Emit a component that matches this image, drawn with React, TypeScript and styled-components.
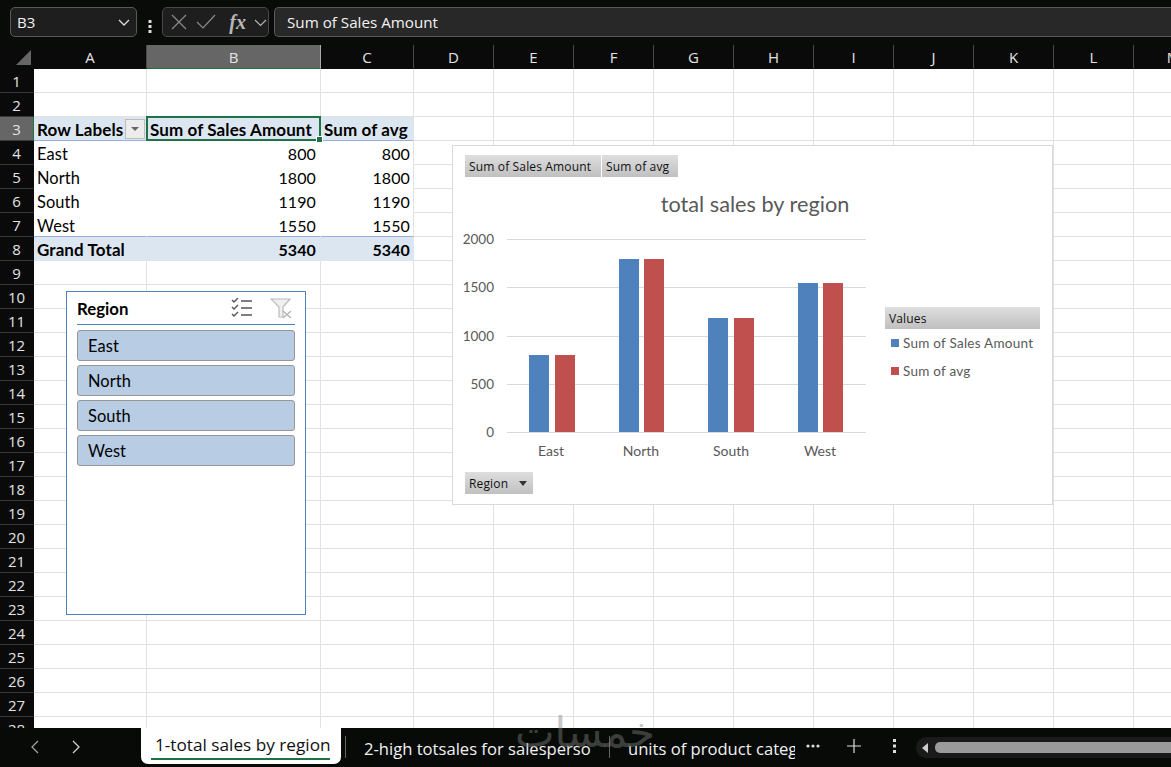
import React from "react";
import styled, { createGlobalStyle } from "styled-components";

const GlobalStyle = createGlobalStyle`
  html, body { margin: 0; padding: 0; background: #0a0d0a; overflow: hidden; }
  #root { width: 1171px; height: 767px; }
`;

const COLS: [string, number][] = [
  ["A", 113], ["B", 174], ["C", 93], ["D", 80], ["E", 80], ["F", 80], ["G", 80],
  ["H", 80], ["I", 80], ["J", 80], ["K", 80], ["L", 80], ["M", 80],
];
const TEMPLATE = `34px ${COLS.map((c) => c[1] + "px").join(" ")}`;

const Page = styled.div`
  position: relative;
  width: 1171px;
  height: 767px;
  overflow: hidden;
  display: flex;
  flex-direction: column;
  background: #070a07;
  font-family: "Lato", "Liberation Sans", sans-serif;
`;

const FormulaBar = styled.div`
  height: 45px;
  flex: none;
  display: flex;
  align-items: flex-start;
  padding: 7px 0 0 10px;
  box-sizing: border-box;
  background: #080b08;
`;
const DarkBox = styled.div`
  height: 30px;
  box-sizing: border-box;
  border: 1px solid #5a5a5a;
  border-radius: 5px;
  background: #1e1e1e;
  display: flex;
  align-items: center;
  color: #f2f2f2;
  font-family: "Open Sans", sans-serif;
  font-size: 15px;
`;
const NameBox = styled(DarkBox)`
  width: 127px;
  padding: 0 5px 0 6px;
  justify-content: space-between;
`;
const Grip = styled.div`
  width: 25px;
  display: flex;
  justify-content: center;
  align-self: center;
`;
const FxBox = styled(DarkBox)`
  width: 107px;
  padding: 0 1px 0 8px;
  justify-content: space-between;
  border-color: #484848;
`;
const Fx = styled.span`
  font-family: "Liberation Serif", serif;
  font-style: italic;
  font-weight: 700;
  font-size: 20px;
  color: #b8b8b8;
  margin-left: 4px;
`;
const FormulaInput = styled(DarkBox)`
  margin-left: 5px;
  flex: 1;
  padding-left: 12px;
  border-right: none;
  border-radius: 5px 0 0 5px;
  background: #282828;
  font-size: 15.2px;
`;

const SheetArea = styled.div`
  position: relative;
  flex: 1;
  overflow: hidden;
  background: #fff;
`;
const HeaderRow = styled.div`
  display: grid;
  grid-template-columns: ${TEMPLATE};
  height: 24px;
  background: #0a0a0a;
`;
const Corner = styled.div`
  position: relative;
  &::after {
    content: "";
    position: absolute;
    right: 3px;
    bottom: 4px;
    border-style: solid;
    border-width: 0 0 15px 15px;
    border-color: transparent transparent #666 transparent;
  }
`;
const ColHead = styled.div<{ $active?: boolean }>`
  display: flex;
  align-items: center;
  justify-content: center;
  box-sizing: border-box;
  color: #e4e4e4;
  font-size: 15px;
  font-family: "Open Sans", sans-serif;
  border-right: 1px solid ${(p) => (p.$active ? "#aaa" : "#4a4a4a")};
  background: ${(p) => (p.$active ? "#666" : "transparent")};
  border-bottom: 1px solid ${(p) => (p.$active ? "#1f7246" : "transparent")};
`;
const Row = styled.div`
  display: grid;
  grid-template-columns: ${TEMPLATE};
  height: 24px;
`;
const RowHead = styled.div<{ $active?: boolean }>`
  display: flex;
  align-items: center;
  justify-content: center;
  box-sizing: border-box;
  color: #e4e4e4;
  font-size: 15px;
  font-family: "Open Sans", sans-serif;
  background: ${(p) => (p.$active ? "#666" : "#0a0a0a")};
  border-bottom: 1px solid #3a3a3a;
  border-right: 1px solid ${(p) => (p.$active ? "#1f7246" : "#0a0a0a")};
`;
const Cell = styled.div<{ $fill?: boolean; $right?: boolean; $bold?: boolean; $bottomLine?: boolean; $pivot?: boolean; $edge?: boolean; $pr?: number }>`
  position: relative;
  box-sizing: border-box;
  display: flex;
  align-items: center;
  justify-content: ${(p) => (p.$right ? "flex-end" : "flex-start")};
  padding: 1px ${(p) => p.$pr ?? 3}px 0 3px;
  font-size: ${(p) => (p.$right ? 16 : p.$bold ? 17 : 16.4)}px;
  letter-spacing: 0.1px;
  white-space: nowrap;
  color: #000;
  font-weight: ${(p) => (p.$bold ? 700 : 400)};
  background: ${(p) => (p.$fill ? "#dce6f1" : "#fff")};
  border-right: 1px solid ${(p) => (p.$fill || (p.$pivot && !p.$edge) ? "transparent" : "#e1e1e1")};
  border-bottom: 1px solid ${(p) => (p.$bottomLine ? "#95b3d7" : p.$fill || p.$pivot ? "transparent" : "#e1e1e1")};
`;
const FilterBtn = styled.span`
  position: absolute;
  right: 1px;
  top: 2px;
  width: 20px;
  height: 20px;
  box-sizing: border-box;
  border: 1px solid #bdbdbd;
  background: #ececec;
  display: flex;
  align-items: center;
  justify-content: center;
  &::after {
    content: "";
    border-style: solid;
    border-width: 4px 4px 0 4px;
    border-color: #666 transparent transparent transparent;
  }
`;
const Selection = styled.div`
  position: absolute;
  inset: -1px -1px -1px -1px;
  border: 2px solid #1f7246;
  z-index: 2;
  &::after {
    content: "";
    position: absolute;
    right: -4px;
    bottom: -4px;
    width: 5px;
    height: 5px;
    background: #1f7246;
    border: 1px solid #fff;
  }
`;

const Slicer = styled.div`
  position: absolute;
  left: 66px;
  top: 246px;
  width: 240px;
  height: 324px;
  box-sizing: border-box;
  border: 1px solid #4f81bd;
  background: #fff;
  padding: 0 10px;
  z-index: 3;
`;
const SlicerHead = styled.div`
  height: 33px;
  box-sizing: border-box;
  display: flex;
  align-items: center;
  justify-content: space-between;
  border-bottom: 1px solid #4f81bd;
  font-weight: 700;
  font-size: 16.8px;
  padding-right: 3px;
`;
const SlicerIcons = styled.div`
  display: flex;
  gap: 17px;
  align-items: center;
`;
const SlicerList = styled.div`
  display: flex;
  flex-direction: column;
  gap: 4px;
  padding-top: 5px;
`;
const SlicerItem = styled.div`
  height: 31px;
  box-sizing: border-box;
  border: 1px solid #969696;
  border-radius: 3px;
  background: #b8cce4;
  padding-left: 10px;
  display: flex;
  align-items: center;
  font-size: 16.4px;
  letter-spacing: 0.1px;
`;

const Chart = styled.div`
  position: absolute;
  left: 452px;
  top: 100px;
  width: 601px;
  height: 360px;
  box-sizing: border-box;
  border: 1px solid #d9d9d9;
  background: #fff;
  z-index: 3;
`;
const ChartPlot = styled.svg`
  display: block;
`;
const FieldRow = styled.div`
  position: absolute;
  left: 12px;
  top: 9px;
  display: flex;
  gap: 1px;
`;
const FieldBtn = styled.div<{ $w: number }>`
  width: ${(p) => p.$w}px;
  height: 22px;
  box-sizing: border-box;
  padding-left: 4px;
  display: flex;
  align-items: center;
  justify-content: space-between;
  font-family: "Open Sans", sans-serif;
  font-size: 12px;
  letter-spacing: 0.15px;
  white-space: nowrap;
  color: #111;
  background: linear-gradient(#dedede, #c0c0c0);
`;
const RegionBtn = styled(FieldBtn)`
  position: absolute;
  left: 12px;
  top: 326px;
  padding-right: 6px;
  &::after {
    content: "";
    border-style: solid;
    border-width: 5px 4px 0 4px;
    border-color: #333 transparent transparent transparent;
  }
`;
const Legend = styled.div`
  position: absolute;
  left: 432px;
  top: 161px;
  width: 155px;
`;
const LegendItem = styled.div`
  height: 28px;
  display: flex;
  align-items: center;
  gap: 4px;
  padding-left: 6px;
  color: #595959;
  font-size: 13.5px;
  letter-spacing: 0.25px;
`;
const Swatch = styled.span<{ $c: string }>`
  width: 8px;
  height: 8px;
  background: ${(p) => p.$c};
`;

const TabBar = styled.div`
  position: absolute;
  left: 0;
  right: 0;
  bottom: 0;
  height: 39px;
  background: #070a07;
  box-sizing: border-box;
  display: flex;
  align-items: flex-start;
  color: #f2f2f2;
  font-family: "Open Sans", sans-serif;
  font-size: 16.6px;
  z-index: 4;
`;
const TabNav = styled.div`
  width: 141px;
  height: 100%;
  display: flex;
  align-items: center;
  gap: 27px;
  padding: 0 0 2px 30px;
  box-sizing: border-box;
  flex: none;
`;
const ActiveTab = styled.div`
  flex: none;
  width: 200px;
  height: 36px;
  box-sizing: border-box;
  background: #fff;
  color: #111;
  border-radius: 0 0 7px 7px;
  padding: 5px 0 0 14px;
  display: flex;
  flex-direction: column;
  align-items: flex-start;
  white-space: nowrap;
  font-size: 17.2px;
  line-height: 23px;
  &::after {
    content: "";
    width: 179px;
    height: 2px;
    background: #1f7246;
    margin: 2px 0 0 -4px;
  }
`;
const Tab = styled.div<{ $w: number; $pad: number }>`
  flex: none;
  width: ${(p) => p.$w}px;
  height: 34px;
  overflow: hidden;
  white-space: nowrap;
  padding: 9px 0 0 ${(p) => p.$pad}px;
  box-sizing: border-box;
`;
const Sep = styled.div`
  width: 1px;
  height: 22px;
  margin: 8px 0 0 4px;
  background: #666;
  flex: none;
`;
const ThinSep = styled(Sep)`
  margin-left: 0;
`;
const TabTools = styled.div`
  flex: none;
  width: 121px;
  height: 100%;
  display: flex;
  align-items: center;
  padding-bottom: 4px;
  box-sizing: border-box;
  padding-left: 6px;
  gap: 10px;
`;
const ScrollTrack = styled.div`
  flex: 1;
  margin-top: 9px;
  height: 21px;
  border-radius: 10px 0 0 10px;
  background: #1a1a1a;
  display: flex;
  align-items: center;
  padding-left: 5px;
  gap: 6px;
`;
const ScrollThumb = styled.div`
  flex: 1;
  height: 11px;
  border-radius: 5px 0 0 5px;
  background: #9a9a9a;
`;
const Watermark = styled.div`
  position: absolute;
  left: 515px;
  top: 708px;
  font-family: "DejaVu Sans", sans-serif;
  font-size: 42px;
  line-height: 50px;
  color: rgba(130, 130, 130, 0.45);
  z-index: 6;
  pointer-events: none;
  direction: rtl;
`;

const rows: Record<number, { a: string; b: string; c: string }> = {
  4: { a: "East", b: "800", c: "800" },
  5: { a: "North", b: "1800", c: "1800" },
  6: { a: "South", b: "1190", c: "1190" },
  7: { a: "West", b: "1550", c: "1550" },
};

const bars = [
  { label: "East", blue: 76, red: 102, cx: 98, h: 77 },
  { label: "North", blue: 166, red: 191, cx: 188, h: 173 },
  { label: "South", blue: 255, red: 281, cx: 278, h: 114 },
  { label: "West", blue: 345, red: 370, cx: 367, h: 149 },
];
const ticks = [
  { v: 0, y: 286 },
  { v: 500, y: 238 },
  { v: 1000, y: 190 },
  { v: 1500, y: 141 },
  { v: 2000, y: 93 },
];

function App() {
  const rowNums = Array.from({ length: 28 }, (_, i) => i + 1);
  const y0 = 286;
  return (
    <Page>
      <GlobalStyle />
      <FormulaBar>
        <NameBox>
          B3
          <svg width="14" height="14" viewBox="0 0 14 14" fill="none" stroke="#ddd" strokeWidth="1.3"><path d="M2 5l5 5 5-5" /></svg>
        </NameBox>
        <Grip>
          <svg width="4" height="14" viewBox="0 0 4 14" fill="#ddd"><rect x="0.5" y="1" width="3" height="3" /><rect x="0.5" y="6" width="3" height="3" /><rect x="0.5" y="11" width="3" height="3" /></svg>
        </Grip>
        <FxBox>
          <svg width="16" height="16" viewBox="0 0 16 16" fill="none" stroke="#8a8a8a" strokeWidth="1.2"><path d="M1 1l14 14M15 1L1 15" /></svg>
          <svg width="22" height="16" viewBox="0 0 22 16" fill="none" stroke="#8a8a8a" strokeWidth="1.2"><path d="M2 8l6 6L20 1" /></svg>
          <Fx>fx</Fx>
          <svg width="13" height="13" viewBox="0 0 13 13" fill="none" stroke="#b8b8b8" strokeWidth="1.1"><path d="M1 4l5.5 5.5L12 4" /></svg>
        </FxBox>
        <FormulaInput>Sum of Sales Amount</FormulaInput>
      </FormulaBar>
      <SheetArea>
        <HeaderRow>
          <Corner />
          {COLS.map(([c]) => (
            <ColHead key={c} $active={c === "B"}>{c}</ColHead>
          ))}
        </HeaderRow>
        {rowNums.map((n) => {
          const r = rows[n];
          if (n === 3) {
            return (
              <Row key={n}>
                <RowHead $active>{n}</RowHead>
                <Cell $fill $bold $bottomLine>Row Labels<FilterBtn /></Cell>
                <Cell $fill $bold $bottomLine>Sum of Sales Amount<Selection /></Cell>
                <Cell $fill $bold $bottomLine $pr={2}>Sum of avg</Cell>
                {COLS.slice(3).map(([c]) => <Cell key={c} />)}
              </Row>
            );
          }
          if (n === 8) {
            return (
              <Row key={n}>
                <RowHead>{n}</RowHead>
                <Cell $fill $bold>Grand Total</Cell>
                <Cell $fill $bold $right $pr={4}>5340</Cell>
                <Cell $fill $bold $right>5340</Cell>
                {COLS.slice(3).map(([c]) => <Cell key={c} />)}
              </Row>
            );
          }
          if (r) {
            return (
              <Row key={n}>
                <RowHead>{n}</RowHead>
                <Cell $pivot $bottomLine={n === 7}>{r.a}</Cell>
                <Cell $pivot $right $pr={4} $bottomLine={n === 7}>{r.b}</Cell>
                <Cell $pivot $edge $right $bottomLine={n === 7}>{r.c}</Cell>
                {COLS.slice(3).map(([c]) => <Cell key={c} />)}
              </Row>
            );
          }
          return (
            <Row key={n}>
              <RowHead>{n}</RowHead>
              {COLS.map(([c]) => <Cell key={c} />)}
            </Row>
          );
        })}
        <Slicer>
          <SlicerHead>
            Region
            <SlicerIcons>
              <svg width="22" height="20" viewBox="0 0 22 20" fill="none" stroke="#555" strokeWidth="1.4">
                <path d="M1 2l2 2 4-4M1 9l2 2 4-4M1 16l2 2 4-4M10 3h11M10 10h11M10 17h11" />
              </svg>
              <svg width="22" height="21" viewBox="0 0 22 21" fill="none">
                <path d="M1 1h19l-7 8v10h-4V9z" fill="#efefef" stroke="#bcbcbc" strokeWidth="1.2" />
                <path d="M13 13l8 7M21 13l-8 7" stroke="#b4b4b4" strokeWidth="1.4" />
              </svg>
            </SlicerIcons>
          </SlicerHead>
          <SlicerList>
            {["East", "North", "South", "West"].map((s) => <SlicerItem key={s}>{s}</SlicerItem>)}
          </SlicerList>
        </Slicer>
        <Chart>
          <ChartPlot width="599" height="358" viewBox="0 0 599 358">
            <text x="302" y="66" textAnchor="middle" fontFamily="Lato, sans-serif" fontSize="21.7" fill="#595959">total sales by region</text>
            {ticks.map((t) => (
              <g key={t.v}>
                <line x1="54" x2="413" y1={t.y + 0.5} y2={t.y + 0.5} stroke="#d9d9d9" />
                <text x="41" y={t.y + 5} textAnchor="end" fontFamily="Lato, sans-serif" fontSize="13.5" fill="#595959">{t.v}</text>
              </g>
            ))}
            {bars.map((b) => (
              <g key={b.label}>
                <rect x={b.blue} y={y0 - b.h} width="20" height={b.h} fill="#4f81bd" />
                <rect x={b.red} y={y0 - b.h} width="20" height={b.h} fill="#c0504d" />
                <text x={b.cx} y="310" textAnchor="middle" fontFamily="Lato, sans-serif" fontSize="14" fill="#595959">{b.label}</text>
              </g>
            ))}
          </ChartPlot>
          <FieldRow>
            <FieldBtn $w={136}>Sum of Sales Amount</FieldBtn>
            <FieldBtn $w={76}>Sum of avg</FieldBtn>
          </FieldRow>
          <RegionBtn $w={68}>Region</RegionBtn>
          <Legend>
            <FieldBtn $w={155}>Values</FieldBtn>
            <LegendItem><Swatch $c="#4f81bd" />Sum of Sales Amount</LegendItem>
            <LegendItem><Swatch $c="#c0504d" />Sum of avg</LegendItem>
          </Legend>
        </Chart>
      </SheetArea>
      <TabBar>
        <TabNav>
          <svg width="12" height="14" viewBox="0 0 12 14" fill="none" stroke="#a0a0a0" strokeWidth="1.3"><path d="M8 1L2 7l6 6" /></svg>
          <svg width="12" height="14" viewBox="0 0 12 14" fill="none" stroke="#d0d0d0" strokeWidth="1.3"><path d="M4 1l6 6-6 6" /></svg>
        </TabNav>
        <ActiveTab>1-total sales by region</ActiveTab>
        <Sep />
        <Tab $w={263} $pad={18}>2-high totsales for salesperso</Tab>
        <ThinSep />
        <Tab $w={185} $pad={18}>units of product category</Tab>
        <TabTools>
          <svg width="62" height="16" viewBox="0 0 62 16" fill="#ddd"><circle cx="7" cy="8" r="1.6" /><circle cx="12" cy="8" r="1.6" /><circle cx="17" cy="8" r="1.6" /><path d="M53 1v14M46 8h14" stroke="#ddd" strokeWidth="1.2" /></svg>
          <svg width="24" height="16" viewBox="0 0 24 16" fill="#ddd"><rect x="20" y="1" width="3" height="3" /><rect x="20" y="6.5" width="3" height="3" /><rect x="20" y="12" width="3" height="3" /></svg>
        </TabTools>
        <ScrollTrack>
          <svg width="8" height="12" viewBox="0 0 8 12" fill="#ccc"><path d="M7 1v10L1 6z" /></svg>
          <ScrollThumb />
        </ScrollTrack>
      </TabBar>
      <Watermark>خمسات</Watermark>
    </Page>
  );
}

export default App;
